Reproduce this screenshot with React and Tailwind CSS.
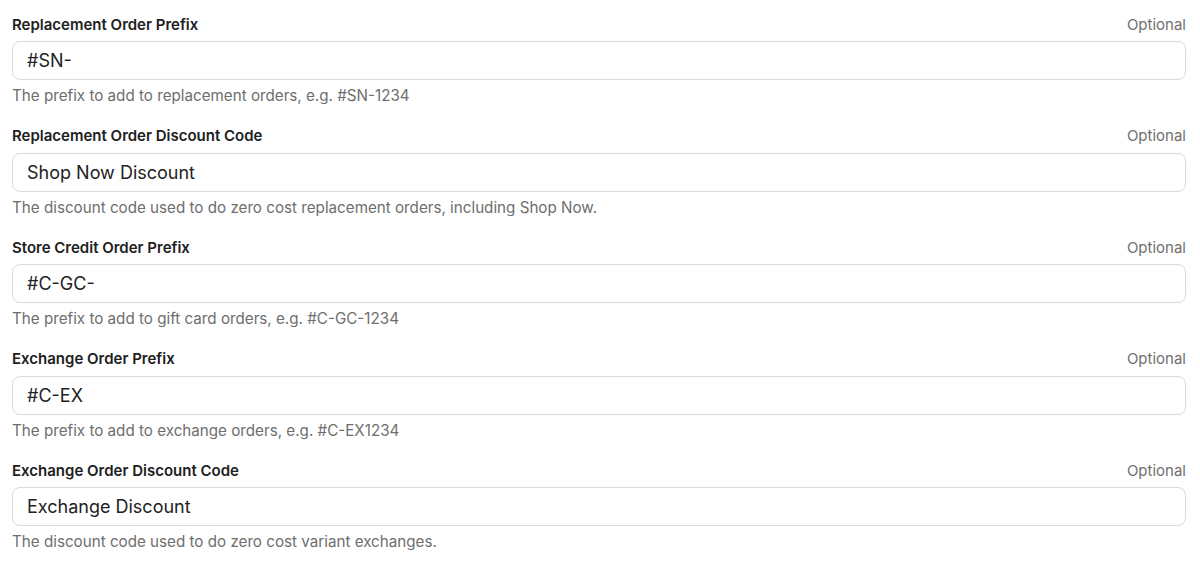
import React from 'react';

const fields = [
  { label: 'Replacement Order Prefix', value: '#SN-', help: 'The prefix to add to replacement orders, e.g. #SN-1234' },
  { label: 'Replacement Order Discount Code', value: 'Shop Now Discount', help: 'The discount code used to do zero cost replacement orders, including Shop Now.' },
  { label: 'Store Credit Order Prefix', value: '#C-GC-', help: 'The prefix to add to gift card orders, e.g. #C-GC-1234' },
  { label: 'Exchange Order Prefix', value: '#C-EX', help: 'The prefix to add to exchange orders, e.g. #C-EX1234' },
  { label: 'Exchange Order Discount Code', value: 'Exchange Discount', help: 'The discount code used to do zero cost variant exchanges.' },
];

const App = () => {
  return (
    <div className="min-h-screen bg-white pl-3 pr-[14px] pt-[15px] font-['Inter',sans-serif]">
      <div className="flex flex-col gap-[20.5px]">
        {fields.map((f) => (
          <div key={f.label} className="flex flex-col">
            <div className="flex items-center justify-between h-5">
              <label className="text-[15px] font-semibold text-[#202020]">{f.label}</label>
              <span className="text-[15px] text-[#707070]">Optional</span>
            </div>
            <input
              readOnly
              value={f.value}
              className="mt-[6px] h-[39px] w-full rounded-lg border border-[#d9d9d9] bg-white px-[14px] text-[18px] text-[#222] outline-none"
            />
            <p className="mt-[6px] h-5 leading-5 text-[15.2px] text-[#6e6e6e]">{f.help}</p>
          </div>
        ))}
      </div>
    </div>
  );
};

export default App;
